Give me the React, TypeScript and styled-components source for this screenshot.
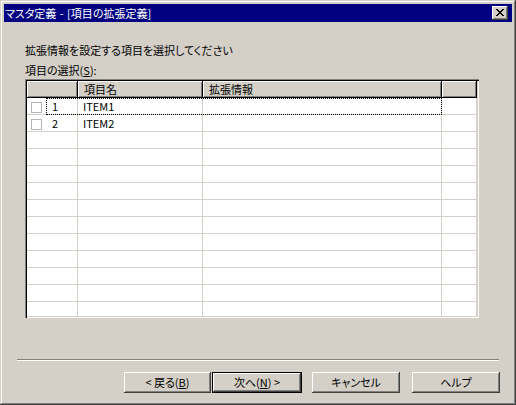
import React from "react";
import styled, { createGlobalStyle, css } from "styled-components";

const GlobalStyle = createGlobalStyle`
  html, body { margin: 0; padding: 0; background: #d4d0c8; }
  body {
    font-family: "Noto Sans CJK JP", "Liberation Sans", sans-serif;
    font-size: 11px;
    font-feature-settings: "palt";
    color: #000;
  }
  * { box-sizing: border-box; }
`;

const Window = styled.div`
  width: 516px;
  height: 405px;
  padding: 4px;
  background: #d4d0c8;
  box-shadow: inset -1px -1px #404040, inset 1px 1px #d4d0c8,
    inset -2px -2px #808080, inset 2px 2px #ffffff;
  display: flex;
  flex-direction: column;
`;

const TitleBar = styled.div`
  height: 18px;
  background: #000080;
  color: #fff;
  display: flex;
  align-items: center;
  justify-content: space-between;
  padding: 0 4px 0 1px;
`;

const TitleText = styled.span`
  font-size: 11px;
  line-height: 18px;
  white-space: nowrap;
  word-spacing: 1px;
`;

const raised = css`
  background: #d4d0c8;
  box-shadow: inset -1px -1px #404040, inset 1px 1px #ffffff,
    inset -2px -2px #808080;
`;

const CloseButton = styled.button`
  ${raised};
  width: 16px;
  height: 14px;
  padding: 0 0 1px 0;
  border: none;
  display: flex;
  align-items: center;
  justify-content: center;
`;

const Content = styled.div`
  display: flex;
  flex-direction: column;
  padding-left: 21px;
`;

const Instruction = styled.div`
  margin-top: 20px;
  line-height: 16px;
  white-space: nowrap;
`;

const Label = styled.div`
  margin-top: 4px;
  line-height: 16px;
  white-space: nowrap;
`;

const GridFrame = styled.div`
  margin-top: 1px;
  width: 454px;
  height: 239px;
  padding: 2px;
  background: #fff;
  box-shadow: inset 1px 1px #808080, inset 2px 2px #000000,
    inset -1px -1px #ffffff, inset -2px -2px #d4d0c8;
  overflow: hidden;
`;

const GridInner = styled.div`
  height: 100%;
  overflow: hidden;
  display: flex;
  flex-direction: column;
`;

const columns = css`
  display: grid;
  grid-template-columns: 51px 125px 239px 35px;
  flex: none;
`;

const HeaderRow = styled.div`
  ${columns};
  height: 17px;
`;

const HeaderCell = styled.div`
  background: #d4d0c8;
  box-shadow: inset -1px -1px #000000, inset 1px 1px #ffffff,
    inset -2px -2px #808080;
  padding-left: 6px;
  line-height: 16px;
  white-space: nowrap;
`;

const Row = styled.div`
  ${columns};
  height: 17px;
  position: relative;
`;

const Cell = styled.div`
  border-right: 1px solid #d4d0c8;
  border-bottom: 1px solid #d4d0c8;
  padding-left: 5px;
  line-height: 16px;
  white-space: nowrap;
  background: #fff;
`;

const NumberCell = styled(Cell)`
  display: flex;
  align-items: flex-start;
  padding-left: 4px;
`;

const CheckBox = styled.span`
  width: 11px;
  height: 11px;
  margin-top: 4px;
  border: 1px solid #b4b4b4;
  background: #fff;
  flex: none;
`;

const RowNumber = styled.span`
  margin-left: 10px;
  line-height: 16px;
`;

const FocusRing = styled.div`
  position: absolute;
  left: 19px;
  top: 0;
  width: 396px;
  height: 17px;
  border: 1px dotted #000;
  pointer-events: none;
`;

const Separator = styled.div`
  margin: 41px 0 0 13px;
  width: 482px;
  height: 2px;
  border-top: 1px solid #808080;
  border-bottom: 1px solid #ffffff;
`;

const ButtonRow = styled.div`
  display: flex;
  margin: 11px 0 0 120px;
`;

const Button = styled.button<{ $width: number; $gap?: number; $default?: boolean }>`
  width: ${(p) => p.$width}px;
  height: 21px;
  margin-left: ${(p) => p.$gap ?? 0}px;
  padding: 0;
  border: none;
  font-family: inherit;
  font-size: 11px;
  font-feature-settings: "palt";
  color: #000;
  background: #d4d0c8;
  line-height: 19px;
  white-space: nowrap;
  box-shadow: ${(p) =>
    p.$default
      ? "inset 0 0 0 1px #000000, inset -2px -2px #404040, inset 2px 2px #ffffff, inset -3px -3px #808080"
      : "inset -1px -1px #404040, inset 1px 1px #ffffff, inset -2px -2px #808080"};
`;

const CloseGlyph = () => (
  <svg width="8" height="7" viewBox="0 0 8 7" shapeRendering="crispEdges">
    <path
      d="M0 0h2v1h1v1h2v-1h1v-1h2v1h-1v1h-1v1h-1v1h1v1h1v1h1v1h-2v-1h-1v-1h-2v1h-1v1h-2v-1h1v-1h1v-1h1v-1h-1v-1h-1v-1h-1z"
      fill="#000"
    />
  </svg>
);

const items = [
  { no: "1", name: "ITEM1" },
  { no: "2", name: "ITEM2" },
];
const ROWS = 13;

export default function App() {
  const rows = Array.from({ length: ROWS }, (_, i) => items[i] ?? null);
  return (
    <>
      <GlobalStyle />
      <Window>
        <TitleBar>
          <TitleText>マスタ定義 - [項目の拡張定義]</TitleText>
          <CloseButton aria-label="閉じる">
            <CloseGlyph />
          </CloseButton>
        </TitleBar>
        <Content>
          <Instruction>拡張情報を設定する項目を選択してください</Instruction>
          <Label>
            項目の選択(<u>S</u>):
          </Label>
          <GridFrame>
            <GridInner>
              <HeaderRow>
                <HeaderCell />
                <HeaderCell>項目名</HeaderCell>
                <HeaderCell>拡張情報</HeaderCell>
                <HeaderCell />
              </HeaderRow>
              {rows.map((item, i) => (
                <Row key={i}>
                  <NumberCell>
                    {item && (
                      <>
                        <CheckBox />
                        <RowNumber>{item.no}</RowNumber>
                      </>
                    )}
                  </NumberCell>
                  <Cell>{item?.name}</Cell>
                  <Cell />
                  <Cell />
                  {i === 0 && <FocusRing />}
                </Row>
              ))}
            </GridInner>
          </GridFrame>
        </Content>
        <Separator />
        <ButtonRow>
          <Button $width={87}>
            &lt; 戻る(<u>B</u>)
          </Button>
          <Button $width={90} $gap={1} $default>
            次へ(<u>N</u>) &gt;
          </Button>
          <Button $width={88} $gap={10}>
            キャンセル
          </Button>
          <Button $width={88} $gap={12}>
            ヘルプ
          </Button>
        </ButtonRow>
      </Window>
    </>
  );
}
